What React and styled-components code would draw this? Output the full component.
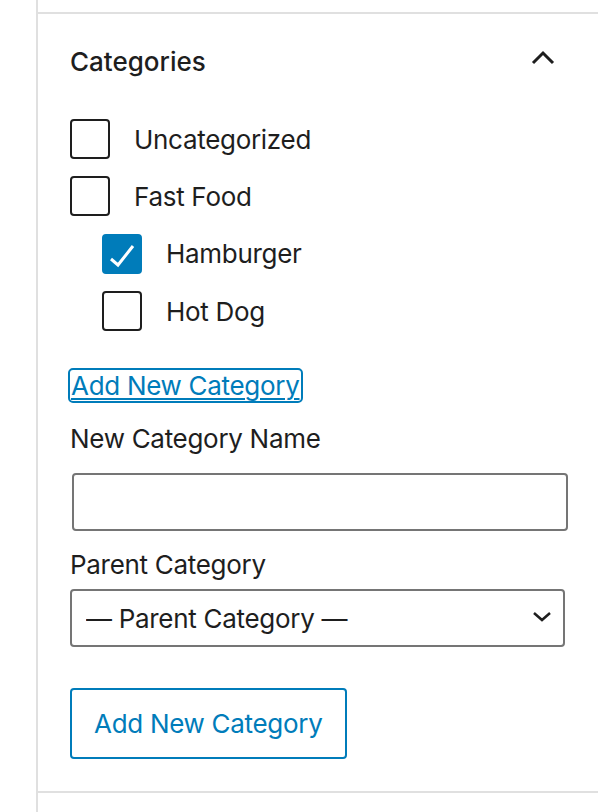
import React from 'react'
import styled, { createGlobalStyle } from 'styled-components'

const GlobalStyle = createGlobalStyle`
    html, body {
        margin: 0;
        padding: 0;
        background: #fff;
    }
    body {
        font-family: Inter, "Noto Sans", sans-serif;
        color: #1e1e1e;
        letter-spacing: -0.3px;
    }
`

const Page = styled.div`
    display: flex;
    min-height: 812px;
`

const Gutter = styled.div`
    width: 36px;
    flex: none;
`

const Sidebar = styled.div`
    flex: 1;
    border-left: 2px solid #e0e0e0;
`

const PrevPanel = styled.div`
    height: 12px;
    border-bottom: 2px solid #e0e0e0;
`

const Panel = styled.section`
    padding: 0 32px 32px 32px;
    border-bottom: 2px solid #e0e0e0;
`

const Header = styled.div`
    display: flex;
    align-items: center;
    justify-content: space-between;
    height: 96px;
`

const Title = styled.h2`
    margin: 0;
    font-size: 26px;
    font-weight: 500;
    line-height: 32px;
    letter-spacing: 0;
`

const Toggle = styled.span`
    display: flex;
    width: 26px;
    height: 26px;
    margin-right: 12px;
    margin-top: -2px;
`

const List = styled.ul`
    list-style: none;
    margin: 9px 0 0 0;
    padding: 0;
    display: flex;
    flex-direction: column;
    gap: 17.4px;
`

const Item = styled.li`
    display: flex;
    align-items: center;
    gap: 24px;
    height: 40px;
    padding-left: ${p => p.$level * 32}px;
    font-size: 26px;
`

const Box = styled.span`
    width: 40px;
    height: 40px;
    box-sizing: border-box;
    border-radius: 4px;
    border: 2px solid ${p => (p.$checked ? '#007cba' : '#1e1e1e')};
    background: ${p => (p.$checked ? '#007cba' : '#fff')};
    display: flex;
    flex: none;
`

const AddLink = styled.a`
    display: inline-block;
    margin-top: 37px;
    margin-left: -2px;
    padding: 0 1px;
    font-size: 26px;
    line-height: 31px;
    color: #007cba;
    text-decoration: underline;
    text-underline-offset: 3px;
    text-decoration-thickness: 2px;
    border: 2px solid #007cba;
    border-radius: 5px;
`

const Form = styled.div`
    display: flex;
    flex-direction: column;
`

const Label = styled.label`
    font-size: 26px;
    line-height: 32px;
    margin-top: ${p => p.$top}px;
    margin-bottom: ${p => p.$bottom}px;
`

const Field = styled.input`
    box-sizing: border-box;
    height: 58px;
    margin-left: 2px;
    width: 496px;
    border: 2px solid #757575;
    border-radius: 4px;
    background: #fff;
    font-size: 26px;
    padding: 0 16px;
`

const SelectWrap = styled.div`
    position: relative;
    width: 495px;
`

const Select = styled.select`
    appearance: none;
    box-sizing: border-box;
    width: 100%;
    height: 58px;
    border: 2px solid #757575;
    border-radius: 4px;
    background: #fff;
    color: #1e1e1e;
    font-family: Inter, "Noto Sans", sans-serif;
    font-size: 26px;
    letter-spacing: -0.3px;
    padding: 0 48px 0 14px;
`

const Chevron = styled.svg`
    position: absolute;
    right: 14px;
    top: 22px;
    pointer-events: none;
`

const Button = styled.button`
    align-self: flex-start;
    margin-top: 41px;
    height: 71px;
    padding: 0 22px;
    box-sizing: border-box;
    border: 2px solid #007cba;
    border-radius: 4px;
    background: #fff;
    color: #007cba;
    font-family: Inter, "Noto Sans", sans-serif;
    font-size: 26px;
    letter-spacing: -0.3px;
`

const categories = [
    { name: 'Uncategorized', level: 0 },
    { name: 'Fast Food', level: 0 },
    { name: 'Hamburger', level: 1, checked: true },
    { name: 'Hot Dog', level: 1 },
]

const App = () => {
    return (
        <Page>
            <GlobalStyle />
            <Gutter />
            <Sidebar>
                <PrevPanel />
                <Panel>
                    <Header>
                        <Title>Categories</Title>
                        <Toggle>
                            <svg width="26" height="26" viewBox="0 0 26 26">
                                <path d="M3 15 L13 5 L23 15" fill="none" stroke="#1e1e1e" strokeWidth="3" />
                            </svg>
                        </Toggle>
                    </Header>
                    <List>
                        {categories.map(c => (
                            <Item key={c.name} $level={c.level}>
                                <Box $checked={c.checked}>
                                    {c.checked && (
                                        <svg width="36" height="36" viewBox="0 0 36 36">
                                            <path d="M7 23 L14 29 L29 10" fill="none" stroke="#fff" strokeWidth="3" />
                                        </svg>
                                    )}
                                </Box>
                                {c.name}
                            </Item>
                        ))}
                    </List>
                    <AddLink href="#">Add New Category</AddLink>
                    <Form>
                        <Label $top={20} $bottom={18}>New Category Name</Label>
                        <Field type="text" />
                        <Label $top={18} $bottom={8}>Parent Category</Label>
                        <SelectWrap>
                            <Select defaultValue="">
                                <option value="">— Parent Category —</option>
                            </Select>
                            <Chevron width="18" height="12" viewBox="0 0 18 12">
                                <path d="M1 2 L9 9 L17 2" fill="none" stroke="#1e1e1e" strokeWidth="2.5" />
                            </Chevron>
                        </SelectWrap>
                        <Button>Add New Category</Button>
                    </Form>
                </Panel>
            </Sidebar>
        </Page>
    )
}

export default App
